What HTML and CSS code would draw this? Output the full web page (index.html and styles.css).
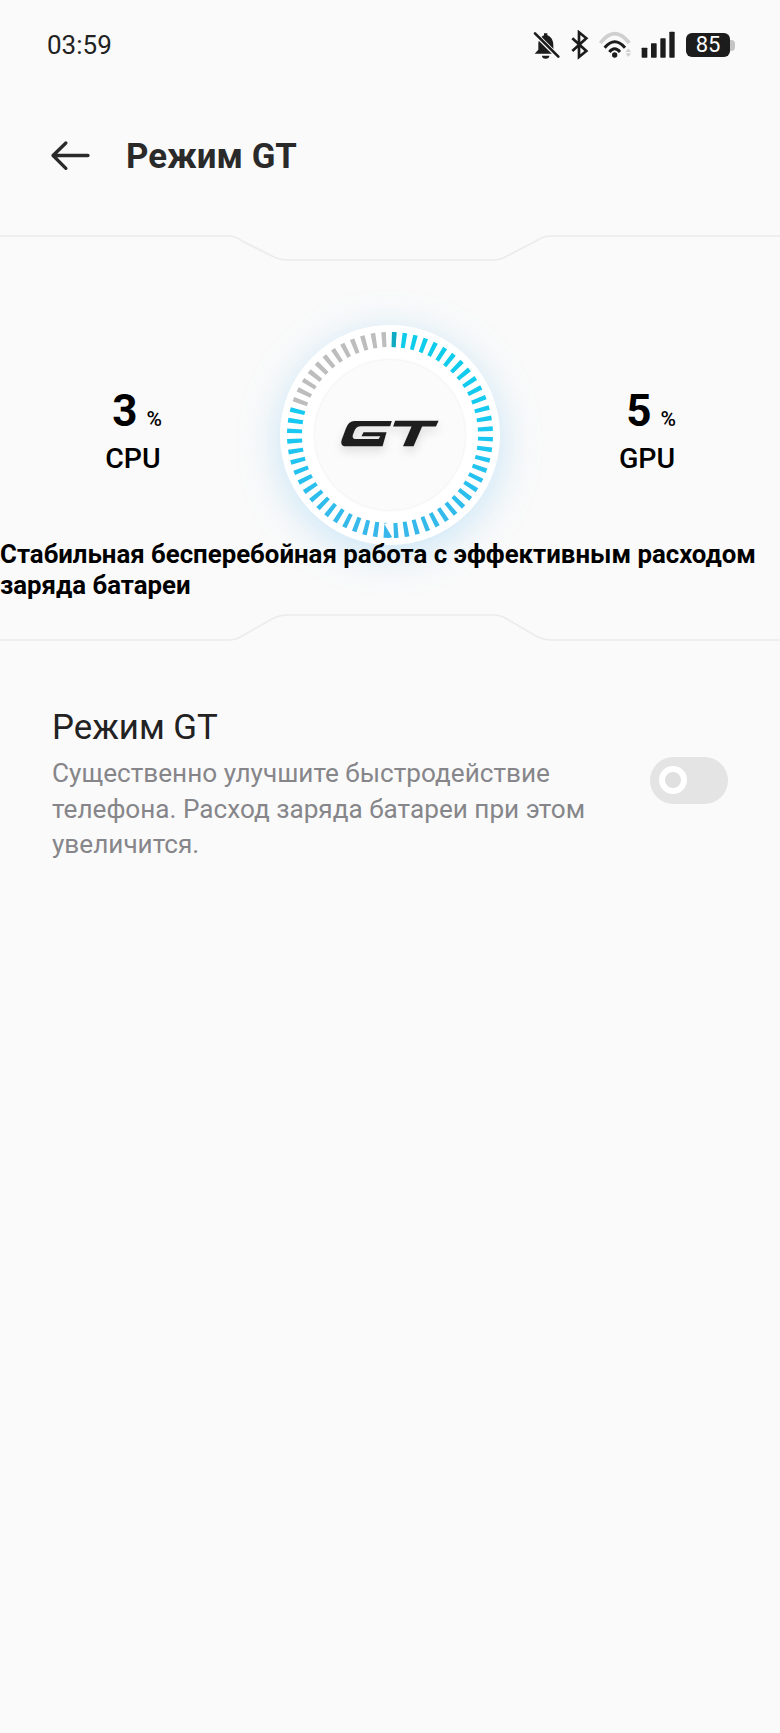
FILE: index.html
```html
<!DOCTYPE html>
<html lang="ru">
<head>
<meta charset="utf-8">
<title>Режим GT</title>
<link rel="stylesheet" href="styles.css">
</head>
<body>
<div class="page">
  <div class="status">
    <span class="time">03:59</span>
    <div class="status-icons">
      <svg class="ic-bell" viewBox="99 45 93 90"><path class="dark" d="M107 116L118 104V88C118 74 127 64 135 61V55H145V61C155 64 163 75 163 90V104L175 116Z"/><path class="dark" d="M129 122H151A11 9 0 0 1 129 122Z"/><path class="cut" d="M102 50L182 130"/><path class="slash" d="M108 55L178 125"/></svg>
      <svg class="ic-bt" viewBox="210 45 66 90"><path class="line" d="M220 70L262 108L240 126V52L262 70L220 108"/></svg>
      <svg class="ic-wifi" viewBox="294 45 114 90"><path class="arc-light" d="M304 84Q347 28 391 84"/><path class="arc" d="M317 98Q347 62 378 98"/><path class="arc" d="M331 111Q347 92 363 111"/><circle class="dark" cx="347" cy="120" r="8"/><path class="light" d="M380 111H396L388 100ZM380 115H396L388 126Z"/></svg>
      <svg class="ic-signal" viewBox="426 45 105 90"><rect class="dark" x="428" y="98" width="17" height="30" rx="2"/><rect class="dark" x="456" y="85" width="17" height="43" rx="2"/><rect class="dark" x="484" y="70" width="16" height="58" rx="2"/><rect class="dark" x="511" y="50" width="16" height="78" rx="2"/></svg>
      <div class="battery">85</div>
    </div>
  </div>

  <header class="header">
    <svg class="back" viewBox="57 58 124 94"><path d="M172 105H66M105 67L66 105L105 144"/></svg>
    <h1 class="title">Режим GT</h1>
  </header>

  <svg class="divider divider-top" viewBox="0 0 780 32"><path d="M0 4H228Q236 4 242 9L272 24Q279 28 288 28H492Q501 28 507 24L536 9Q543 4 552 4H780"/></svg>

  <section class="hero">
    <div class="stat">
      <div class="stat-value"><span class="num">3</span><span class="pct">%</span></div>
      <div class="stat-name">CPU</div>
    </div>
    <div class="disc">
      <svg class="ring" viewBox="0 0 220 220">
        <defs>
          <linearGradient id="tick" x1="1" y1="0" x2="0" y2="0">
            <stop offset="0" stop-color="#0fcdea"/>
            <stop offset="0.5" stop-color="#18c8f2"/>
            <stop offset="1" stop-color="#38b8ea"/>
          </linearGradient>
        </defs>
        <circle class="ticks" cx="110" cy="110" r="95.5" pathLength="360" stroke="url(#tick)" transform="rotate(-88.9 110 110)"/>
        <circle class="ticks-clear" cx="110" cy="110" r="95.5" pathLength="360" transform="rotate(-161.5 110 110)"/>
        <circle class="ticks-gray" cx="110" cy="110" r="95.5" pathLength="360" transform="rotate(-160.9 110 110)"/>
        <circle class="tick-first" cx="110" cy="110" r="95.5" pathLength="360" transform="rotate(-88.9 110 110)"/>
      </svg>
      <div class="core">
        <svg class="gt" viewBox="30 55 305 88"><path d="M75 61H188L183 77H95Q80 77 75 90L70 103Q66 115 80 116H148L153 107H96L102 95H172L160 138H50Q30 138 36 118L48 85Q56 61 75 61Z"/><path d="M198 60H330L322 78H280L254 138H222L248 78H192Z"/></svg>
      </div>
    </div>
    <div class="stat">
      <div class="stat-value"><span class="num">5</span><span class="pct">%</span></div>
      <div class="stat-name">GPU</div>
    </div>
  </section>

  <p class="hero-text">Стабильная бесперебойная работа с эффективным расходом заряда батареи</p>

  <svg class="divider divider-bottom" viewBox="0 0 780 32"><path d="M0 28H228Q236 28 242 24L272 7Q279 3 288 3H492Q501 3 507 7L536 24Q543 28 552 28H780"/></svg>

  <section class="setting">
    <div class="setting-text">
      <h2 class="setting-title">Режим GT</h2>
      <p class="setting-desc">Существенно улучшите быстродействие телефона. Расход заряда батареи при этом увеличится.</p>
    </div>
    <div class="toggle"><span class="knob"></span></div>
  </section>
</div>
</body>
</html>
```

FILE: styles.css
```css
* { box-sizing: border-box; }
html, body { margin: 0; padding: 0; }
body {
  background: #fafafa;
  font-family: Roboto, "Noto Sans", "Liberation Sans", sans-serif;
  color: #000;
}
.page { width: 780px; height: 1733px; overflow: hidden; }

.status {
  height: 90px;
  padding: 30px 50px 0 47px;
  display: flex;
  justify-content: space-between;
  align-items: flex-start;
}
.time { font-size: 26px; line-height: 31px; color: #222; }
.status-icons { display: flex; gap: 6px; height: 30px; align-items: center; }
.status-icons svg { height: 30px; display: block; }
.ic-bell { width: 31px; }
.ic-bt { width: 22px; }
.ic-wifi { width: 38px; }
.ic-signal { width: 35px; }
.dark { fill: #1c1c1c; }
.light { fill: #cfcfcf; }
.cut { stroke: #fafafa; stroke-width: 14; fill: none; }
.slash { stroke: #1c1c1c; stroke-width: 8; fill: none; stroke-linecap: round; }
.line { stroke: #1c1c1c; stroke-width: 8; fill: none; stroke-linejoin: miter; }
.arc { stroke: #1c1c1c; stroke-width: 9; fill: none; }
.arc-light { stroke: #cfcfcf; stroke-width: 11; fill: none; }
.battery {
  position: relative;
  margin-left: 4px;
  width: 44px;
  height: 24px;
  border-radius: 6px;
  background: #1c1c1c;
  color: #fff;
  font-size: 22px;
  line-height: 24px;
  text-align: center;
}
.battery::after {
  content: "";
  position: absolute;
  left: 44px;
  top: 7px;
  width: 5px;
  height: 11px;
  background: #c4c4c4;
  border-radius: 0 4px 4px 0;
}

.header {
  height: 130px;
  padding-left: 50px;
  display: flex;
  align-items: center;
  gap: 35px;
}
.back { width: 41px; height: 31px; display: block; }
.back path { stroke: #2a2a2a; stroke-width: 10; fill: none; stroke-linecap: round; stroke-linejoin: round; }
.title { margin: 0; padding-top: 1px; font-size: 34.8px; line-height: 40px; font-weight: 700; color: #2a2a2a; }

.divider { display: block; width: 780px; height: 32px; }
.divider path { stroke: #ebebeb; stroke-width: 1.6; fill: none; }
.divider-top { margin-top: 12px; }
.divider-bottom { margin-top: 11px; }

.hero {
  margin-top: 61px;
  height: 220px;
  display: grid;
  grid-template-columns: 266px 248px 266px;
  justify-items: center;
  align-items: center;
}
.stat { display: flex; flex-direction: column; align-items: center; padding-bottom: 9px; }
.stat-value { display: flex; align-items: baseline; gap: 9px; padding-left: 8px; }
.num { font-size: 44px; line-height: 50px; font-weight: 700; }
.pct { font-size: 21px; font-weight: 500; }
.stat-name { font-size: 28.5px; line-height: 32px; font-weight: 500; margin-top: 7px; }

.disc {
  position: relative;
  width: 220px;
  height: 220px;
  border-radius: 50%;
  background: #fff;
  box-shadow: 0 8px 40px rgba(110, 190, 240, 0.36);
  display: flex;
  align-items: center;
  justify-content: center;
}
.ring { position: absolute; left: 0; top: 0; width: 220px; height: 220px; }
.ticks, .ticks-gray, .ticks-clear, .tick-first { fill: none; stroke-width: 15; }
.ticks { stroke-dasharray: 2.6 3.4; }
.ticks-clear { stroke: #fff; stroke-width: 17; stroke-dasharray: 72 288; }
.ticks-gray {
  stroke: #bdbdbd;
  stroke-dasharray: 2.6 3.4 2.6 3.4 2.6 3.4 2.6 3.4 2.6 3.4 2.6 3.4 2.6 3.4 2.6 3.4 2.6 3.4 2.6 3.4 2.6 3.4 2.6 300;
}
.tick-first { stroke: #12aac0; stroke-dasharray: 2.6 357.4; }
.core {
  width: 150px;
  height: 150px;
  border-radius: 50%;
  background: #fbfbfb;
  box-shadow: 0 0 3px rgba(0, 0, 0, 0.10);
  display: flex;
  align-items: center;
  justify-content: center;
}
.gt {
  width: 102px;
  height: 29px;
  display: block;
  margin-top: -4px;
  filter: drop-shadow(0 5px 5px rgba(0, 0, 0, 0.12));
}
.gt path { fill: #1e1e1e; }

.hero-text {
  position: relative;
  margin: -6px 0 0;
  font-size: 25.8px;
  line-height: 31px;
  font-weight: 700;
  color: #000;
}

.setting {
  margin-top: 60px;
  padding: 0 52px;
  display: flex;
  justify-content: space-between;
  align-items: center;
}
.setting-text { width: 540px; }
.setting-title { margin: 0; font-size: 34.8px; line-height: 46px; font-weight: 400; color: #222; }
.setting-desc { margin: 6px 0 0; font-size: 26.15px; line-height: 35.5px; color: #86868a; }
.toggle {
  width: 78px;
  height: 47px;
  border-radius: 24px;
  background: #e4e4e4;
  margin-top: -6px;
  padding: 9px 0 0 9px;
}
.knob {
  display: block;
  width: 28px;
  height: 28px;
  border-radius: 50%;
  border: 6px solid #fff;
  background: #e0e0e0;
}
```
